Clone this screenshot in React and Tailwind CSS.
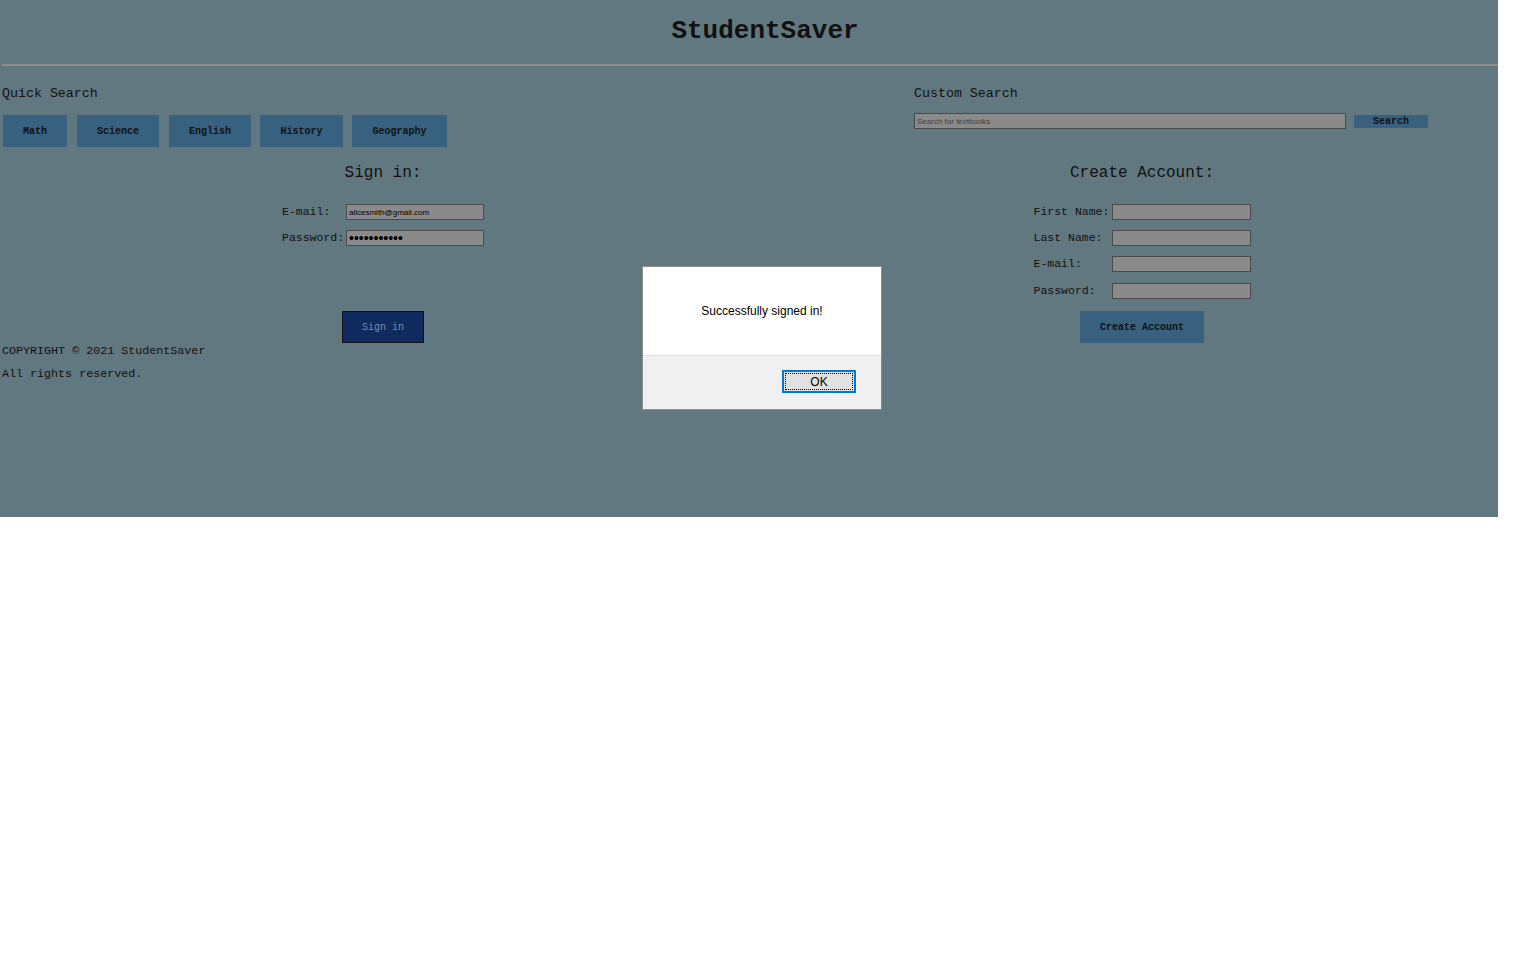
import React from 'react';

const subjects = [
  { name: 'Math', w: 'w-[64px] mr-[10px]' },
  { name: 'Science', w: 'w-[82px] mr-[10px]' },
  { name: 'English', w: 'w-[82px] mr-[9px]' },
  { name: 'History', w: 'w-[83px] mr-[9px]' },
  { name: 'Geography', w: 'w-[95px]' },
];

const Field = ({ label, value, type = 'text', labelW, inputW = 'w-[139px]' }) => (
  <div className="flex items-center h-[26px]">
    <span className={`${labelW} text-[11.5px] text-[#111]`}>{label}</span>
    <input
      type={type}
      defaultValue={value}
      className={`${inputW} h-[16px] leading-[14px] bg-[#8a8a8a] border border-[#4a4a4a] px-[2px] text-black font-['Liberation_Sans',sans-serif] outline-none ${
        type === 'password' ? 'text-[14px]' : 'text-[8px]'
      }`}
    />
  </div>
);

const App = () => {
  return (
    <div className="relative w-[1498px] h-[517px] bg-[#627880] font-['Liberation_Mono',monospace] text-[#111]">
      <div className="w-[1530px] flex justify-center pt-[17px] h-[64px]">
        <h1 className="text-[26px] font-bold leading-[28px]">StudentSaver</h1>
      </div>
      <div className="ml-[2px] w-[1496px] h-[2px] bg-[#8b8b8b]" />

      <div className="flex pt-[21px]">
        <div className="w-[912px] shrink-0 pl-[2px]">
          <h3 className="text-[13.3px] leading-[14px]">Quick Search</h3>
          <div className="flex mt-[14px] pl-[1px]">
            {subjects.map((s) => (
              <button
                key={s.name}
                className={`${s.w} h-[32px] bg-[#37617f] text-[10px] font-bold text-[#111]`}
              >
                {s.name}
              </button>
            ))}
          </div>
        </div>
        <div className="pl-[2px] shrink-0">
          <h3 className="text-[13.3px] leading-[14px]">Custom Search</h3>
          <div className="flex items-start gap-[8px] mt-[12px]">
            <input
              placeholder="Search for textbooks"
              className="w-[432px] h-[16px] bg-[#8a8a8a] border border-[#4a4a4a] px-[2px] text-[8px] font-['Liberation_Sans',sans-serif] placeholder:text-[#3e3e3e] outline-none"
            />
            <button className="mt-[2px] w-[74px] h-[13px] bg-[#37617f] text-[10px] leading-[13px] font-bold text-[#111]">
              Search
            </button>
          </div>
        </div>
      </div>

      <div className="flex pt-[17px]">
        <div className="w-[766px] shrink-0 flex flex-col items-center">
          <h2 className="text-[16px] leading-[18px]">Sign in:</h2>
          <div className="mt-[17px] h-[112px]">
            <Field label="E-mail:" value="alicesmith@gmail.com" labelW="w-[64px]" inputW="w-[138px]" />
            <Field label="Password:" value="abcdefghijk" type="password" labelW="w-[64px]" inputW="w-[138px]" />
          </div>
          <button className="w-[82px] h-[32px] bg-[#0f2a5f] border border-[#111] text-[10px] text-[#7d8aa0]">
            Sign in
          </button>
        </div>
        <div className="w-[752px] shrink-0 flex flex-col items-center">
          <h2 className="text-[16px] leading-[18px]">Create Account:</h2>
          <div className="mt-[17px] h-[112px]">
            <Field label="First Name:" labelW="w-[78px]" />
            <Field label="Last Name:" labelW="w-[78px]" />
            <Field label="E-mail:" labelW="w-[78px]" />
            <div className="mt-[1px]">
              <Field label="Password:" type="password" labelW="w-[78px]" />
            </div>
          </div>
          <button className="w-[124px] h-[32px] bg-[#37617f] text-[10px] font-bold text-[#111]">
            Create Account
          </button>
        </div>
      </div>

      <div className="pl-[2px] pt-[1px] text-[11.7px] leading-[14px]">
        <p>COPYRIGHT © 2021 StudentSaver</p>
        <p className="mt-[9px]">All rights reserved.</p>
      </div>

      <div className="absolute left-[642px] top-[266px] w-[240px] h-[144px] border border-[#8d8d8d] flex flex-col font-['Liberation_Sans',sans-serif]">
        <div className="h-[88px] bg-white flex items-center justify-center text-[12px] text-black">
          Successfully signed in!
        </div>
        <div className="flex-1 bg-[#f0f0f0] border-t border-[#dfdfdf] flex justify-end items-start pt-[14px] pr-[25px]">
          <button className="w-[74px] h-[23px] bg-[#e1e1e1] border-2 border-[#0078d7] outline-1 outline-dotted outline-black -outline-offset-4 text-[12px] text-black">
            OK
          </button>
        </div>
      </div>
    </div>
  );
};

export default App;
